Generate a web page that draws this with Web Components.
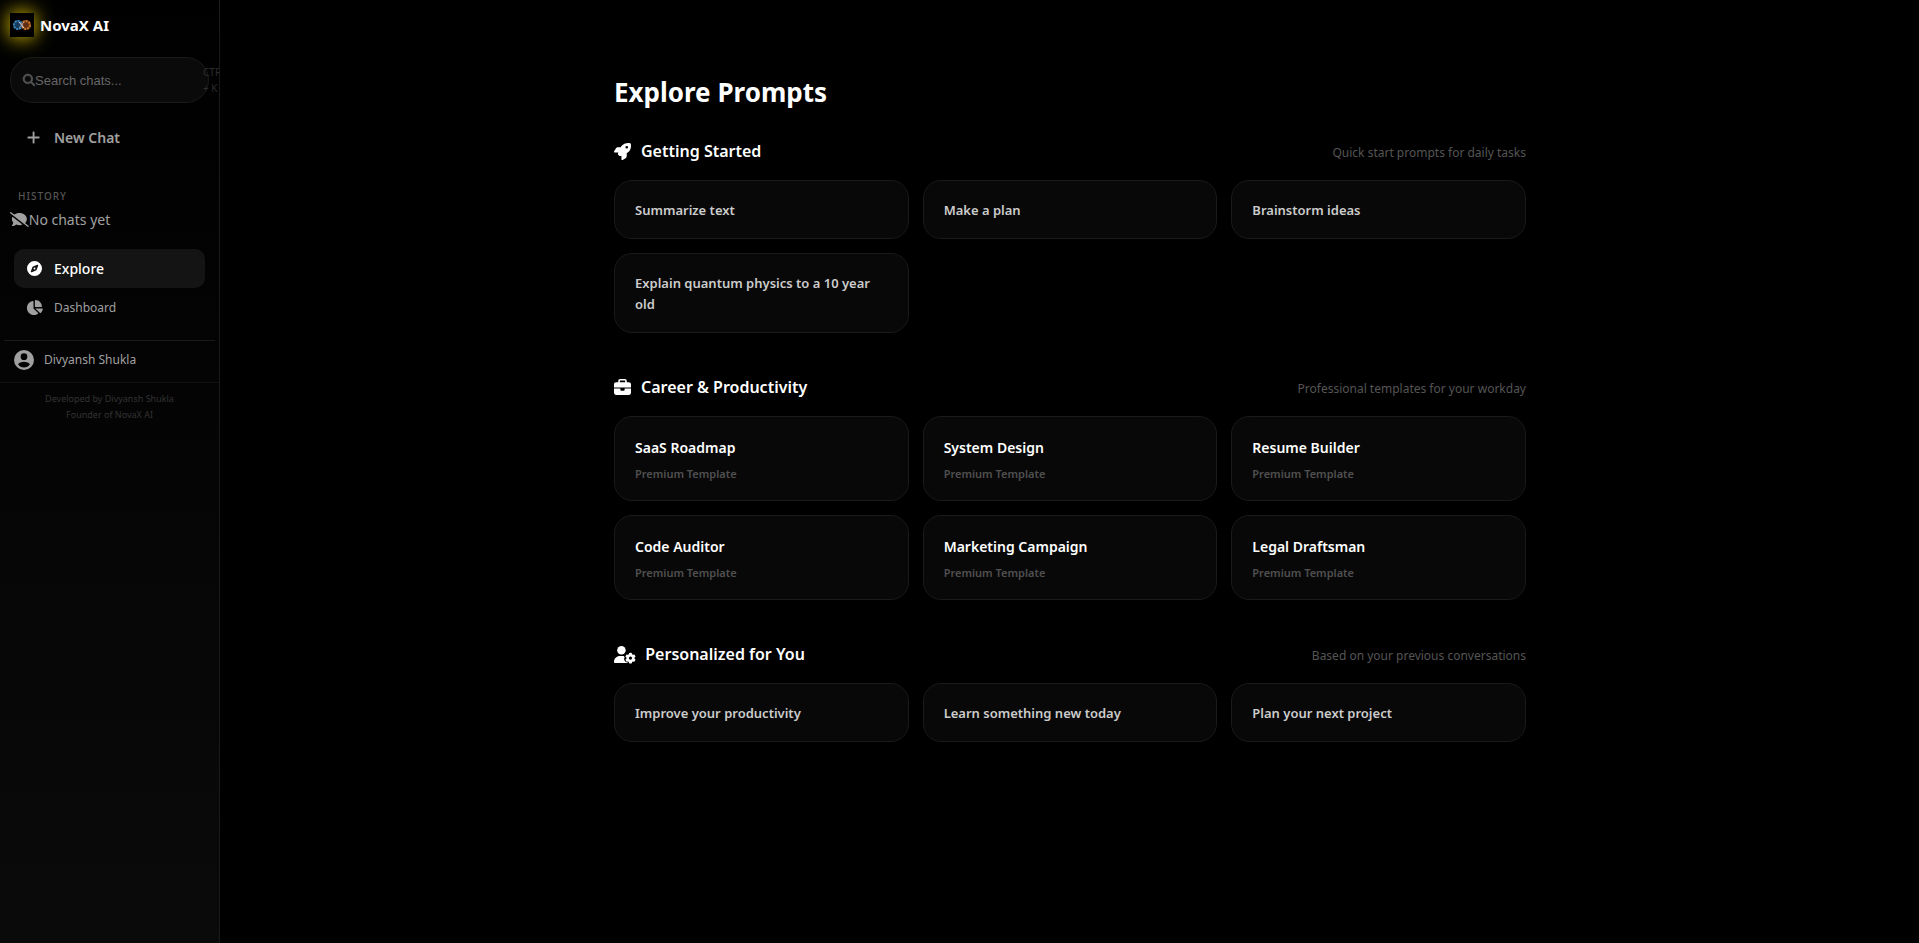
<!DOCTYPE html>
<html lang="en">
<head>
<meta charset="utf-8">
<meta name="viewport" content="width=device-width, initial-scale=1">
<title>NovaX AI</title>
<style>
body {
  margin: 0;
  background: #000;
  color: #fff;
  font-family: "Noto Sans", "Open Sans", sans-serif;
}
</style>
</head>
<body>
<novax-app></novax-app>

<script>
const ICONS = {
  search: ['0 0 512 512', '<path stroke="currentColor" stroke-width="24" d="M416 208c0 45.9-14.9 88.3-40 122.7L502.6 457.4c12.5 12.5 12.5 32.8 0 45.3s-32.8 12.5-45.3 0L330.7 376c-34.4 25.2-76.8 40-122.7 40C93.1 416 0 322.9 0 208S93.1 0 208 0S416 93.1 416 208zM208 352a144 144 0 1 0 0-288 144 144 0 1 0 0 288z"/>'],
  plus: ['0 0 448 512', '<path d="M256 80c0-17.7-14.3-32-32-32s-32 14.3-32 32V224H48c-17.7 0-32 14.3-32 32s14.3 32 32 32H192V432c0 17.7 14.3 32 32 32s32-14.3 32-32V288H400c17.7 0 32-14.3 32-32s-14.3-32-32-32H256V80z"/>'],
  'comment-slash': ['0 0 640 512', '<path d="M38.8 5.1C28.4-3.1 13.3-1.2 5.1 9.2S-1.2 34.7 9.2 42.9l592 464c10.4 8.2 25.5 6.3 33.7-4.1s6.3-25.5-4.1-33.7L512.9 376.7C552.2 340.2 576 292.3 576 240C576 125.4 461.4 32 320 32c-67.7 0-129.3 21.4-175.1 56.3L38.8 5.1zm385.2 425L82.9 161.3C70.7 185.6 64 212.2 64 240c0 45.1 17.7 86.8 47.7 120.9c-1.9 24.5-11.4 46.3-21.4 62.9c-5.5 9.2-11.1 16.6-15.2 21.6c-2.1 2.5-3.7 4.4-4.9 5.7l-1.6 1.7c-4.6 4.6-5.9 11.4-3.4 17.4c2.5 6 8.3 9.9 14.8 9.9c28.7 0 57.6-8.9 81.6-19.3c22.9-10 42.4-21.9 54.3-30.6c31.8 11.5 67 17.9 104.1 17.9c37 0 72.3-6.4 104.1-17.9z"/>'],
  compass: ['0 0 512 512', '<path d="M256 512A256 256 0 1 0 256 0a256 256 0 1 0 0 512zm50.7-186.9L162.4 380.6c-19.4 7.5-38.5-11.6-31-31l55.5-144.3c3.3-8.5 9.9-15.1 18.4-18.4l144.3-55.5c19.4-7.5 38.5 11.6 31 31L325.1 306.7c-3.2 8.5-9.9 15.1-18.4 18.4zM288 256a32 32 0 1 0 -64 0 32 32 0 1 0 64 0z"/>'],
  pie: ['0 0 576 512', '<path d="M304 240V16.6c0-9 7-16.6 16-16.6C443.7 0 544 100.3 544 224c0 9-7.6 16-16.6 16H304zM32 272C32 150.7 122.1 50.3 239 34.3c9.2-1.3 17 6.1 17 15.4V288L412.5 444.5c6.7 6.7 6.2 17.7-1.5 23.1C371.8 495.6 323.8 512 272 512C139.5 512 32 404.6 32 272zm526.4 16c9.3 0 16.6 7.8 15.4 17c-7.7 55.9-34.6 105.6-73.9 142.3c-6 5.6-15.4 5.2-21.2-.7L320 288H558.4z"/>'],
  user: ['0 0 24 24', '<path fill-rule="evenodd" d="M12 0a12 12 0 1 0 0 24a12 12 0 1 0 0-24zM12 4a4 4 0 1 1 0 8a4 4 0 1 1 0-8zM12 21c-3 0-5.500-1.300-7-3.600c.5-2.100 4.300-3.200 7-3.200s6.500 1.100 7 3.200c-1.500 2.300-4 3.600-7 3.600z"/>'],
  rocket: ['0 0 512 512', '<path d="M156.6 384.9L125.7 354c-8.5-8.5-11.5-20.8-7.7-32.2c3-8.9 7-20.5 11.8-33.8L24 288c-8.6 0-16.6-4.6-20.9-12.1s-4.2-16.7 .2-24.1l52.5-88.5c13-21.9 36.5-35.3 61.9-35.3l82.3 0c2.4-4 4.8-7.7 7.2-11.3C289.1-4.1 411.1-8.1 483.9 5.3c11.6 2.1 20.6 11.2 22.8 22.8c13.4 72.9 9.3 194.8-111.4 276.7c-3.5 2.4-7.3 4.8-11.3 7.2v82.3c0 25.4-13.4 49-35.3 61.9l-88.5 52.5c-7.4 4.4-16.6 4.5-24.1 .2s-12.1-12.2-12.1-20.9V380.8c-14.1 4.9-26.4 8.9-35.7 11.9c-11.2 3.6-23.4 .5-31.8-7.8zM384 168a40 40 0 1 0 0-80 40 40 0 1 0 0 80z"/>'],
  briefcase: ['0 0 512 512', '<path d="M184 48H328c4.4 0 8 3.6 8 8V96H176V56c0-4.4 3.6-8 8-8zm-56 8V96H64C28.7 96 0 124.7 0 160v96H192 320 512V160c0-35.3-28.7-64-64-64H384V56c0-30.9-25.1-56-56-56H184c-30.9 0-56 25.1-56 56zM512 288H320v32c0 17.7-14.3 32-32 32H224c-17.7 0-32-14.3-32-32V288H0V416c0 35.3 28.7 64 64 64H448c35.3 0 64-28.7 64-64V288z"/>'],
  'user-gear': ['0 0 640 512', `<path d="M224 0a128 128 0 1 1 0 256A128 128 0 1 1 224 0z"/>
    <path d="M178 304h92c12 0 23 1 34 3c-2 19 7 36 22 45c-17 11-27 32-20 53c4 13 9 26 16 38s15 23 25 33c15 17 39 18 57 9c0 10 3 19 8 27H30C13 512 0 499 0 482C0 384 80 304 178 304z"/>
    <path fill-rule="evenodd" d="M456 210q40-10 80 0l8 40q16 7 28 17l38-13q28 30 38 68l-30 27q2 16 0 33l30 27q-10 38-38 68l-38-13q-12 10-28 17l-8 40q-40 10-80 0l-8-40q-16-7-28-17l-38 13q-28-30-38-68l30-27q-2-17 0-33l-30-27q10-38 38-68l38 13q12-10 28-17zM496 317a48 48 0 1 0 0 96a48 48 0 1 0 0-96z"/>`]
};

/** Base class: writes css and html into an open shadow root. */
class NovaxElement extends HTMLElement {
  connectedCallback() {
    if (this.shadowRoot) return;
    const root = this.attachShadow({mode: 'open'});
    root.innerHTML = `<style>${this.css}</style>${this.html}`;
  }
}

/** Monochrome icon, sized by its "height" attribute. */
class NovaxIcon extends NovaxElement {
  get css() {
    return `
:host { display: inline-flex; justify-content: center; flex: none; }
svg { display: block; fill: currentColor; overflow: visible; }`;
  }
  get html() {
    const [box, shapes] = ICONS[this.getAttribute('name')];
    return `<svg viewBox="${box}" height="${this.getAttribute('height') || 16}" aria-hidden="true">${shapes}</svg>`;
  }
}

/** Logo tile with its golden glow, and the product name. */
class NovaxBrand extends NovaxElement {
  get css() {
    return `
:host { display: flex; align-items: center; gap: 6px; height: 24px; color: #fff; font-size: 15px; font-weight: 700; }
.tile { width: 24px; height: 24px; background: #000; box-shadow: 0 0 20px #ffdf00; }
svg { display: block; }
/* keeps the name above the glow */
span { position: relative; }`;
  }
  get html() {
    return `
<div class="tile">
  <svg width="24" height="24" viewBox="0 0 24 24" fill="none" aria-hidden="true">
    <ellipse cx="8" cy="12" rx="5" ry="5" fill="#123a5c"/>
    <ellipse cx="16" cy="12" rx="5" ry="5" fill="#6d3410"/>
    <ellipse cx="8" cy="12" rx="4" ry="4" stroke="#3d86bd" stroke-width="2" stroke-dasharray="2 1"/>
    <ellipse cx="16" cy="12" rx="4" ry="4" stroke="#c4742c" stroke-width="2" stroke-dasharray="2 1"/>
    <circle cx="8" cy="12" r="2" fill="#1c3c5c"/>
    <circle cx="16" cy="12" r="2" fill="#5e2c18"/>
    <path d="M9 9l5 6" stroke="#d3dbe5"/>
    <path d="M14 9l-5 6" stroke="#9a91a0"/>
  </svg>
</div>
<span><slot></slot></span>`;
  }
}

/** Search pill. The shortcut hint runs out past its end and is cut by the sidebar. */
class NovaxSearch extends NovaxElement {
  get css() {
    return `
:host { display: block; }
label {
  display: flex; align-items: center; box-sizing: border-box;
  height: 46px; padding-left: 12px;
  background: #0a0a0a; border: 1px solid #1a1a1a; border-radius: 23px;
  color: #555;
}
input {
  flex: 0 0 168px; width: 168px; box-sizing: border-box; padding: 0;
  border: 0; outline: 0; background: none; color: #ccc;
  font: 13px "Liberation Sans", Arial, sans-serif;
}
input::placeholder { color: #666; opacity: 1; }
kbd { flex: 0 0 26px; color: #2c2c2c; font: 10px/16px "Noto Sans", sans-serif; }`;
  }
  get html() {
    return `
<label>
  <novax-icon name="search" height="12"></novax-icon>
  <input type="text" placeholder="Search chats..." aria-label="Search chats">
  <kbd>CTRL + K</kbd>
</label>`;
  }
}

/** Sidebar entry: icon column and label; "active" fills the row, "strong" thickens the label. */
class NovaxNavItem extends NovaxElement {
  get css() {
    return `
:host { display: block; color: #a0a0a0; font-size: 12px; }
:host([strong]) { font-size: 14px; font-weight: 600; }
:host([active]) { color: #fff; font-size: 14px; font-weight: 500; }
a {
  display: flex; align-items: center; gap: 10px;
  height: 39px; padding: 0 10px; border-radius: 10px;
  color: inherit; text-decoration: none;
}
:host([active]) a { background: #141414; }
novax-icon { width: 20px; }`;
  }
  get html() {
    return `
<a href="#">
  <novax-icon name="${this.getAttribute('icon')}" height="15"></novax-icon>
  <slot></slot>
</a>`;
  }
}

class NovaxSidebar extends NovaxElement {
  get css() {
    return `
:host {
  display: block; flex: 0 0 220px; box-sizing: border-box; overflow: hidden;
  border-right: 1px solid #1a1a1a;
  background: linear-gradient(180deg, #000, #0a0a0a);
  color: #a0a0a0;
}
.top { padding: 13px 10px 0; }
novax-search { margin-top: 20px; }
nav { padding: 0 14px; }
.new { margin-top: 15px; }
h2 {
  margin: 30px 18px 0; color: #555;
  font-size: 10px; line-height: 18px; font-weight: 500; letter-spacing: 1px;
}
.empty { display: flex; align-items: center; margin: 2px 10px 17px; font-size: 14px; line-height: 25px; }
.user {
  display: flex; align-items: center; gap: 10px;
  margin: 13px 4px 0; padding: 8px 10px 12px; border-top: 1px solid #1a1a1a;
  font-size: 12px; line-height: 21px;
}
footer {
  padding: 8px 0; border-top: 1px solid #111; text-align: center;
  color: #333; font-size: 9px; line-height: 16px;
}
footer p { margin: 0; }`;
  }
  get html() {
    return `
<div class="top">
  <novax-brand>NovaX AI</novax-brand>
  <novax-search></novax-search>
</div>
<nav class="new"><novax-nav-item icon="plus" strong>New Chat</novax-nav-item></nav>
<h2>HISTORY</h2>
<div class="empty"><novax-icon name="comment-slash" height="15"></novax-icon>No chats yet</div>
<nav>
  <novax-nav-item icon="compass" active>Explore</novax-nav-item>
  <novax-nav-item icon="pie">Dashboard</novax-nav-item>
</nav>
<div class="user"><novax-icon name="user" height="20"></novax-icon>Divyansh Shukla</div>
<footer>
  <p>Developed by Divyansh Shukla</p>
  <p>Founder of NovaX AI</p>
</footer>`;
  }
}

/** Prompt card; with a "note" it becomes a titled template card. */
class NovaxCard extends NovaxElement {
  get css() {
    return `
:host { display: flex; }
button {
  flex: 1; box-sizing: border-box; padding: 19px 20px 17px;
  display: flex; flex-direction: column; justify-content: center;
  background: #080808; border: 1px solid #1a1a1a; border-radius: 18px;
  color: #ccc; font: 600 13px/21px "Noto Sans", sans-serif; text-align: left; cursor: pointer;
}
button:hover { border-color: #333; }
:host([note]) button { color: #fff; font-size: 14px; line-height: 24px; }
small { margin-top: 4px; color: #505050; font-size: 11px; line-height: 19px; font-weight: 600; }`;
  }
  get html() {
    const note = this.getAttribute('note');
    return `<button type="button"><span><slot></slot></span>${note ? `<small>${note}</small>` : ''}</button>`;
  }
}

class NovaxSection extends NovaxElement {
  get css() {
    return `
:host { display: block; }
header { display: flex; align-items: flex-end; justify-content: space-between; height: 27px; margin-bottom: 16px; }
h2 { display: flex; align-items: center; gap: 10px; margin: 0; font-size: 16px; line-height: 25px; font-weight: 600; }
header > span { color: #555; font-size: 12px; line-height: 23px; }
.grid { display: grid; grid-template-columns: repeat(3, 1fr); gap: 14px; }`;
  }
  get html() {
    return `
<header>
  <h2><novax-icon name="${this.getAttribute('icon')}" height="17"></novax-icon>${this.getAttribute('heading')}</h2>
  <span>${this.getAttribute('hint')}</span>
</header>
<div class="grid"><slot></slot></div>`;
  }
}

class NovaxApp extends NovaxElement {
  get css() {
    return `
:host { display: flex; min-height: 100vh; }
main { flex: 1; padding: 71px 24px 71px 25px; }
.content { max-width: 912px; margin: 0 auto; display: flex; flex-direction: column; gap: 40px; }
h1 { margin: 0 0 -16px; font-size: 26px; line-height: 42px; font-weight: 700; }`;
  }
  get html() {
    return `
<novax-sidebar></novax-sidebar>
<main>
  <div class="content">
    <h1>Explore Prompts</h1>
    <novax-section icon="rocket" heading="Getting Started" hint="Quick start prompts for daily tasks">
      <novax-card>Summarize text</novax-card>
      <novax-card>Make a plan</novax-card>
      <novax-card>Brainstorm ideas</novax-card>
      <novax-card>Explain quantum physics to a 10 year old</novax-card>
    </novax-section>
    <novax-section icon="briefcase" heading="Career &amp; Productivity" hint="Professional templates for your workday">
      <novax-card note="Premium Template">SaaS Roadmap</novax-card>
      <novax-card note="Premium Template">System Design</novax-card>
      <novax-card note="Premium Template">Resume Builder</novax-card>
      <novax-card note="Premium Template">Code Auditor</novax-card>
      <novax-card note="Premium Template">Marketing Campaign</novax-card>
      <novax-card note="Premium Template">Legal Draftsman</novax-card>
    </novax-section>
    <novax-section icon="user-gear" heading="Personalized for You" hint="Based on your previous conversations">
      <novax-card>Improve your productivity</novax-card>
      <novax-card>Learn something new today</novax-card>
      <novax-card>Plan your next project</novax-card>
    </novax-section>
  </div>
</main>`;
  }
}

customElements.define('novax-icon', NovaxIcon);
customElements.define('novax-brand', NovaxBrand);
customElements.define('novax-search', NovaxSearch);
customElements.define('novax-nav-item', NovaxNavItem);
customElements.define('novax-sidebar', NovaxSidebar);
customElements.define('novax-card', NovaxCard);
customElements.define('novax-section', NovaxSection);
customElements.define('novax-app', NovaxApp);
</script>
</body>
</html>
